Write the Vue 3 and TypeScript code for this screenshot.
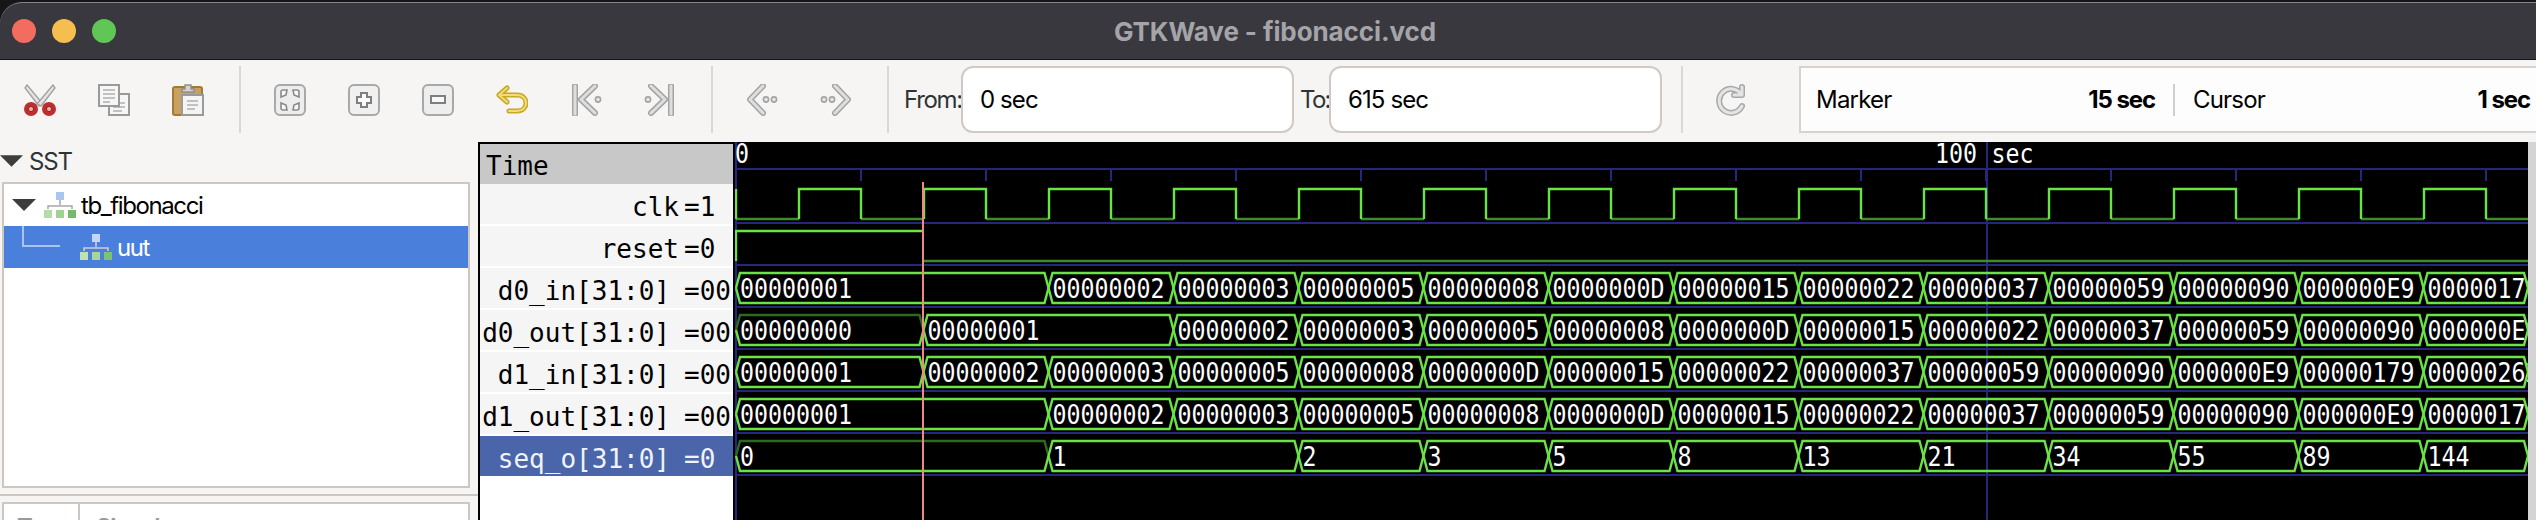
<script setup lang="ts">
interface Segment {
  x0: number
  x1: number
  text: string
  dim: boolean
}

const RIGHT = 2528
const HALF = 62.5
const START = 736

function edge(n: number): number {
  return START + HALF * n
}

function px(n: number): number {
  return Math.round(edge(n) + 0.4)
}

function hex(v: string): string {
  return v.padStart(8, '0')
}

// transitions are half clock periods counted from time 0
function bus(values: string[], firstEdges: number[]): Segment[] {
  const segs: Segment[] = []
  let n = 0
  values.forEach((text, i) => {
    const next = i < firstEdges.length ? firstEdges[i] : n + 2
    const x1 = Math.min(edge(next), RIGHT)
    segs.push({ x0: edge(n), x1, text, dim: /^0+$/.test(text) })
    n = next
  })
  return segs
}

const fibHex = ['00000001', '00000002', '00000003', '00000005', '00000008', '0000000D', '00000015', '00000022', '00000037', '00000059', '00000090', '000000E9', '00000179', '00000262']

const busRows = [
  { top: 273, segs: bus(fibHex.slice(0, 13), [5]) },
  { top: 315, segs: bus([hex('0'), ...fibHex.slice(0, 12)], [3, 7]) },
  { top: 357, segs: bus(fibHex.slice(0, 14), [3, 5]) },
  { top: 399, segs: bus(fibHex.slice(0, 13), [5]) },
  { top: 441, segs: bus(['0', '1', '2', '3', '5', '8', '13', '21', '34', '55', '89', '144'], [5, 9]) },
]

function topLine(s: Segment, top: number): string {
  const mid = top + 15
  return `${s.x0},${mid} ${s.x0 + 4},${top} ${s.x1 - 4},${top} ${s.x1},${mid}`
}

function botLine(s: Segment, top: number): string {
  const mid = top + 15
  const bot = top + 30
  return `${s.x0},${mid} ${s.x0 + 4},${bot} ${s.x1 - 4},${bot} ${s.x1},${mid}`
}

// gtkwave's wave font is taller than it is wide
function textAt(x: number, y: number): string {
  return `translate(${x} ${y}) scale(0.895 1)`
}

const clockHigh: string[] = ['736,189 736,219']
const clockLow: string[] = []
clockLow.push(`736,219 ${px(1)},219`)
for (let n = 1; n < 29; n += 2) {
  clockHigh.push(`${px(n)},219 ${px(n)},189 ${px(n + 1)},189 ${px(n + 1)},219`)
  clockLow.push(`${px(n + 1)},219 ${Math.min(px(n + 2), RIGHT)},219`)
}

const rowLines = [223, 265, 307, 349, 391, 433, 475]
const ticks: number[] = []
for (let n = 2; n < 29; n += 2) ticks.push(px(n))

const signals = [
  { name: 'clk', value: '=1', vector: false, selected: false },
  { name: 'reset', value: '=0', vector: false, selected: false },
  { name: 'd0_in[31:0]', value: '=00', vector: true, selected: false },
  { name: 'd0_out[31:0]', value: '=00', vector: true, selected: false },
  { name: 'd1_in[31:0]', value: '=00', vector: true, selected: false },
  { name: 'd1_out[31:0]', value: '=00', vector: true, selected: false },
  { name: 'seq_o[31:0]', value: '=0', vector: true, selected: true },
]
</script>

<template>
  <div class="window">
    <header class="titlebar">
      <div class="lights">
        <span class="light red"></span>
        <span class="light yellow"></span>
        <span class="light green"></span>
      </div>
      <div class="title">GTKWave - fibonacci.vcd</div>
    </header>

    <div class="toolbar">
      <div class="tools">
        <svg class="icon" viewBox="0 0 32 32">
          <path d="M3 1 L19 20 L15 22 L1 4 Z" fill="#e4e4e4" stroke="#a2a2a2" stroke-width="1.4" />
          <path d="M29 1 L13 20 L17 22 L31 4 Z" fill="#e4e4e4" stroke="#a2a2a2" stroke-width="1.4" />
          <circle cx="7" cy="25" r="7" fill="#bf2e2e" />
          <circle cx="25" cy="25" r="7" fill="#bf2e2e" />
          <circle cx="7" cy="25" r="2.6" fill="#e9b0a8" stroke="#8f1e1e" />
          <circle cx="25" cy="25" r="2.6" fill="#e9b0a8" stroke="#8f1e1e" />
        </svg>
        <svg class="icon" viewBox="0 0 32 32">
          <rect x="11" y="10" width="20" height="21" fill="#f6f6f6" stroke="#9a9a9a" stroke-width="2" />
          <path d="M18 19h9M15 23h12M15 27h9" stroke="#b0b0b0" stroke-width="1.5" />
          <rect x="1" y="1" width="20" height="21" fill="#f6f6f6" stroke="#9a9a9a" stroke-width="2" />
          <path d="M5 6h12M5 10h12M5 14h12M5 18h7" stroke="#b0b0b0" stroke-width="1.5" />
        </svg>
        <svg class="icon" viewBox="0 0 32 32">
          <rect x="1" y="3" width="29" height="28" rx="2" fill="#c9a05f" stroke="#a27a38" stroke-width="2" />
          <rect x="10" y="11" width="21" height="20" fill="#f4f4f4" stroke="#9a9a9a" stroke-width="2" />
          <path d="M15 17h11M15 21h11M15 25h8" stroke="#b0b0b0" stroke-width="1.5" />
          <path d="M10 8h12V5h-3V1h-6v4h-3z" fill="#d4d4d4" stroke="#8e8e8e" stroke-width="1.4" />
        </svg>
      </div>
      <span class="sep"></span>
      <div class="tools">
        <svg class="icon" viewBox="0 0 32 32">
          <rect x="1" y="1" width="30" height="30" rx="5" fill="#ededed" stroke="#a8a8a8" stroke-width="2" />
          <path d="M7 8q0-2 2-2h4l-1 5-5 2zM25 8q0-2-2-2h-4l1 5 5 2zM7 24q0 2 2 2h4l-1-5-5-2zM25 24q0 2-2 2h-4l1-5 5-2z" fill="#f8f8f8" stroke="#8a8a8a" stroke-width="1.6" />
        </svg>
        <svg class="icon" viewBox="0 0 32 32">
          <rect x="1" y="1" width="30" height="30" rx="5" fill="#f0f0f0" stroke="#a8a8a8" stroke-width="2" />
          <path d="M13 9h6v4h4v6h-4v4h-6v-4H9v-6h4z" fill="#fafafa" stroke="#7f7f7f" stroke-width="2" />
        </svg>
        <svg class="icon" viewBox="0 0 32 32">
          <rect x="1" y="1" width="30" height="30" rx="5" fill="#eeeeee" stroke="#a8a8a8" stroke-width="2" />
          <rect x="9" y="12" width="14" height="7" fill="#f8f8f8" stroke="#7f7f7f" stroke-width="2" />
        </svg>
        <svg class="icon" viewBox="0 0 32 32">
          <g fill="none" stroke-linejoin="round">
            <path d="M11 4 L3 11 L11 18 M4 11 H21 C33 11 33 27 21 27 H13" stroke="#c8a824" stroke-width="5" stroke-linecap="round" />
            <path d="M11 4 L3 11 L11 18 M4 11 H21 C33 11 33 27 21 27 H13" stroke="#f0dc78" stroke-width="2" stroke-linecap="round" />
          </g>
        </svg>
        <svg class="icon" viewBox="0 0 32 32">
          <g fill="none" stroke-linecap="round" stroke-linejoin="round">
            <path d="M5 2V30M25 2 L11 15.5 L25 29" stroke="#a4a4a4" stroke-width="6" />
            <path d="M5 2V30M25 2 L11 15.5 L25 29" stroke="#dedede" stroke-width="3" />
          </g>
          <circle cx="28" cy="15.5" r="2.6" fill="#e6e6e6" stroke="#a4a4a4" stroke-width="1.6" />
        </svg>
        <svg class="icon" viewBox="0 0 32 32">
          <g fill="none" stroke-linecap="round" stroke-linejoin="round">
            <path d="M27 2V30M7 2 L21 15.5 L7 29" stroke="#a4a4a4" stroke-width="6" />
            <path d="M27 2V30M7 2 L21 15.5 L7 29" stroke="#dedede" stroke-width="3" />
          </g>
          <circle cx="4" cy="15.5" r="2.6" fill="#e6e6e6" stroke="#a4a4a4" stroke-width="1.6" />
        </svg>
      </div>
      <span class="sep"></span>
      <div class="tools">
        <svg class="icon" viewBox="0 0 32 32">
          <g fill="none" stroke-linecap="round" stroke-linejoin="round">
            <path d="M17 2 L4 15.5 L17 29" stroke="#a4a4a4" stroke-width="6" />
            <path d="M17 2 L4 15.5 L17 29" stroke="#dedede" stroke-width="3" />
          </g>
          <circle cx="20" cy="15.5" r="2.6" fill="#e6e6e6" stroke="#a4a4a4" stroke-width="1.6" />
          <circle cx="28" cy="15.5" r="2.6" fill="#e6e6e6" stroke="#a4a4a4" stroke-width="1.6" />
        </svg>
        <svg class="icon" viewBox="0 0 32 32">
          <g fill="none" stroke-linecap="round" stroke-linejoin="round">
            <path d="M15 2 L28 15.5 L15 29" stroke="#a4a4a4" stroke-width="6" />
            <path d="M15 2 L28 15.5 L15 29" stroke="#dedede" stroke-width="3" />
          </g>
          <circle cx="4" cy="15.5" r="2.6" fill="#e6e6e6" stroke="#a4a4a4" stroke-width="1.6" />
          <circle cx="12" cy="15.5" r="2.6" fill="#e6e6e6" stroke="#a4a4a4" stroke-width="1.6" />
        </svg>
      </div>
      <span class="sep last"></span>
      <label class="field-label from">From:</label>
      <div class="field">0 sec</div>
      <label class="field-label to">To:</label>
      <div class="field">615 sec</div>
      <span class="sep reload-sep"></span>
      <svg class="icon reload" viewBox="0 0 32 32">
        <g fill="none" stroke-linecap="round" stroke-linejoin="round">
          <path d="M26 3 V11 H18 M25 10 A12 12 0 1 0 26 22" stroke="#a8a8a8" stroke-width="6" />
          <path d="M26 3 V11 H18 M25 10 A12 12 0 1 0 26 22" stroke="#e4e4e4" stroke-width="3" />
        </g>
      </svg>
      <div class="status">
        <div class="status-cell">
          <span>Marker</span>
          <b>15 sec</b>
        </div>
        <span class="status-div"></span>
        <div class="status-cell">
          <span>Cursor</span>
          <b>1 sec</b>
        </div>
      </div>
    </div>

    <main class="main">
      <aside class="sidebar">
        <div class="sst">
          <svg class="arrow" viewBox="0 0 24 12"><path d="M0 0H24L12 12Z" fill="#3d3d3d" /></svg>
          <span>SST</span>
        </div>
        <div class="tree">
          <div class="tree-row">
            <svg class="arrow small" viewBox="0 0 24 12"><path d="M0 0H24L12 12Z" fill="#3d3d3d" /></svg>
            <svg class="module" viewBox="0 0 32 26">
              <rect x="12" y="0" width="8" height="8" fill="#a9c6ee" />
              <path d="M16 8v5M4 17v-3h24v3" fill="none" stroke="#a8a8a8" stroke-width="1.5" />
              <rect x="0" y="18" width="8" height="8" fill="#b4dca6" />
              <rect x="12" y="18" width="8" height="8" fill="#a0d291" />
              <rect x="24" y="18" width="8" height="8" fill="#72bc66" />
            </svg>
            <span>tb_fibonacci</span>
          </div>
          <div class="tree-row selected">
            <span class="branch"></span>
            <svg class="module" viewBox="0 0 32 26">
              <rect x="12" y="0" width="8" height="8" fill="#c4d6f4" />
              <path d="M16 8v5M4 17v-3h24v3" fill="none" stroke="#d0d0d0" stroke-width="1.5" />
              <rect x="0" y="18" width="8" height="8" fill="#bfe2ae" />
              <rect x="12" y="18" width="8" height="8" fill="#a8d69a" />
              <rect x="24" y="18" width="8" height="8" fill="#7cc472" />
            </svg>
            <span>uut</span>
          </div>
        </div>
        <div class="divider"></div>
        <div class="list-head">
          <span class="col-type">Type</span>
          <span class="col-signals">Signals</span>
        </div>
      </aside>

      <section class="signals">
        <div class="time-head">Time</div>
        <div
          v-for="sig in signals"
          :key="sig.name"
          class="sig-row"
          :class="{ selected: sig.selected }"
        >
          <span class="sig-name" :class="{ vector: sig.vector }">{{ sig.name }}</span>
          <span class="sig-value">{{ sig.value }}</span>
        </div>
      </section>

      <svg class="waves" viewBox="735 142 1793 378" width="1793" height="378">
        <g class="grid">
          <line x1="735" x2="2528" y1="169" y2="169" />
          <line v-for="y in rowLines" :key="y" x1="735" x2="2528" :y1="y" :y2="y" />
          <line v-for="x in ticks" :key="x" :x1="x" :x2="x" y1="169" y2="181" />
          <line x1="736" x2="736" y1="142" y2="520" />
          <line x1="1987" x2="1987" y1="142" y2="520" />
        </g>

        <g class="labels">
          <text :transform="textAt(735, 163)">0</text>
          <text :transform="textAt(1935, 163)">100</text>
          <text :transform="textAt(1991.5, 163)">sec</text>
        </g>
        <g v-for="row in busRows" :key="row.top" class="labels">
          <text v-for="s in row.segs" :key="s.x0" :transform="textAt(s.x0 + 4, row.top + 25)">{{ s.text }}</text>
        </g>

        <g class="low">
          <polyline v-for="p in clockLow" :key="p" :points="p" />
          <polyline points="923,261 2528,261" />
        </g>
        <g class="high">
          <polyline v-for="p in clockHigh" :key="p" :points="p" />
          <polyline points="736,261 736,231 922,231" />
        </g>
        <g v-for="row in busRows" :key="'b' + row.top">
          <template v-for="s in row.segs" :key="s.x0">
            <polyline :class="s.dim ? 'dim' : 'bright'" :points="topLine(s, row.top)" />
            <polyline class="bright" :points="botLine(s, row.top)" />
          </template>
        </g>
        <line class="marker" x1="923" x2="923" y1="182" y2="520" />
      </svg>

      <div class="scrollbar"></div>
    </main>
  </div>
</template>

<style scoped>
.window {
  width: 2536px;
  height: 520px;
  overflow: hidden;
  font-family: Inter, "Noto Sans", sans-serif;
  display: flex;
  flex-direction: column;
  box-sizing: border-box;
  padding-top: 2px;
}

.titlebar {
  height: 56px;
  flex: none;
  display: flex;
  align-items: center;
  background: #38383e;
  border-top: 1px solid #85858a;
  border-bottom: 1px solid #141416;
  border-radius: 22px 0 0 0;
}

.lights {
  display: flex;
  gap: 16px;
  padding-left: 12px;
  flex: none;
}

.light {
  width: 24px;
  height: 24px;
  border-radius: 50%;
}

.red { background: #f26d60; }
.yellow { background: #f6bd4f; }
.green { background: #60c655; }

.title {
  flex: 1;
  margin-left: -102px;
  text-align: center;
  color: #a4a4a9;
  font-size: 26px;
  font-weight: 700;
  letter-spacing: -0.1px;
}

.toolbar {
  height: 82px;
  flex: none;
  display: flex;
  align-items: center;
  padding-left: 24px;
  background: #f6f5f4;
  box-sizing: border-box;
  padding-bottom: 3px;
}

.tools {
  display: flex;
  gap: 42px;
}

.icon {
  width: 32px;
  height: 32px;
  flex: none;
  filter: blur(0.5px);
}

.sep {
  width: 2px;
  height: 67px;
  flex: none;
  margin: 0 33px 0 35px;
  background: #dad8d5;
}

.sep.last {
  margin-right: 15px;
}

.sep.reload-sep {
  margin: 0 33px 0 19px;
}

.field-label {
  color: #2e3436;
  font-size: 24px;
  letter-spacing: -1.3px;
  flex: none;
}

.from { width: 57px; }
.to { width: 29px; margin-left: 6px; letter-spacing: -1.7px; }

.field {
  width: 333px;
  height: 67px;
  flex: none;
  box-sizing: border-box;
  border: 2px solid #cfcac5;
  border-radius: 12px;
  background: #fff;
  display: flex;
  align-items: center;
  padding-left: 17px;
  font-size: 24px;
  letter-spacing: -0.9px;
  color: #000;
}

.reload {
  margin-right: 51px;
}

.status {
  flex: none;
  width: 760px;
  height: 67px;
  box-sizing: border-box;
  border: 2px solid #d6d3ce;
  background: #fdfdfd;
  display: grid;
  grid-template-columns: 339px 38px 337px;
  align-items: center;
  padding-left: 15px;
  font-size: 24px;
  letter-spacing: -0.8px;
  color: #000;
}

.status-cell {
  display: flex;
  justify-content: space-between;
}

.status-cell b {
  font-weight: 700;
  letter-spacing: -1.1px;
}

.status-div {
  width: 2px;
  height: 32px;
  background: #cfcfcf;
  margin-left: 18px;
}

.main {
  flex: 1;
  min-height: 0;
  display: flex;
  background: #000;
}

.sidebar {
  width: 478px;
  flex: none;
  display: flex;
  flex-direction: column;
  background: #f6f5f4;
  color: #000;
  font-size: 24px;
  letter-spacing: -1.4px;
}

.sst {
  height: 40px;
  flex: none;
  display: flex;
  align-items: center;
  gap: 6px;
  color: #2e3436;
  padding-bottom: 2px;
  box-sizing: border-box;
  letter-spacing: -1.2px;
}

.arrow {
  width: 23px;
  height: 12px;
  flex: none;
}

.arrow.small {
  width: 24px;
  margin: 0 3px 0 8px;
}

.tree {
  height: 306px;
  flex: none;
  margin: 0 8px 0 2px;
  box-sizing: border-box;
  border: 2px solid #cdc7c2;
  background: #fff;
}

.tree-row {
  height: 42px;
  display: flex;
  align-items: center;
  gap: 5px;
}

.tree-row.selected {
  background: #4a80dc;
  color: #fff;
}

.module {
  width: 32px;
  height: 26px;
  flex: none;
  filter: blur(0.4px);
}

.branch {
  width: 38px;
  height: 21px;
  flex: none;
  align-self: flex-start;
  margin: 0 15px 0 18px;
  border-left: 2px solid #a9c4f0;
  border-bottom: 2px solid #a9c4f0;
  box-sizing: border-box;
}

.divider {
  height: 2px;
  flex: none;
  margin-top: 6px;
  background: #cdc7c2;
}

.list-head {
  height: 40px;
  flex: none;
  margin: 6px 8px 0 2px;
  box-sizing: border-box;
  border: 2px solid #cdc7c2;
  border-bottom: 0;
  background: #fff;
  display: flex;
  color: #9a9a9a;
  font-weight: 600;
  overflow: hidden;
}

.col-type {
  width: 76px;
  flex: none;
  box-sizing: border-box;
  border-right: 2px solid #cdc7c2;
  padding: 9px 0 0 13px;
}

.col-signals {
  padding: 9px 0 0 16px;
}

.signals {
  width: 257px;
  flex: none;
  box-sizing: border-box;
  border: solid #000;
  border-width: 2px 2px 0 2px;
  background: #fff;
  font-family: "DejaVu Sans Mono", monospace;
  font-size: 26px;
  color: #000;
  overflow: hidden;
}

.time-head {
  height: 40px;
  box-sizing: border-box;
  background: #c8c8c8;
  padding-left: 6px;
  line-height: 44px;
}

.sig-row {
  height: 40px;
  margin-bottom: 2px;
  background: #f5f5f5;
  display: grid;
  grid-template-columns: 204px 49px;
  line-height: 46px;
  white-space: pre;
}

.sig-row.selected {
  background: #4a65a9;
  color: #f0f3fa;
}

.sig-name {
  text-align: right;
  padding-right: 5px;
}

.sig-name.vector {
  padding-right: 14px;
}

.sig-value {
  overflow: hidden;
}

.waves {
  flex: none;
  display: block;
  background: #000;
}

.labels text {
  font-family: "DejaVu Sans Mono", monospace;
  font-size: 26px;
  fill: #fff;
}

.grid line {
  stroke: #26267c;
  stroke-width: 2;
}

.waves polyline {
  fill: none;
  stroke-width: 2.4;
}

.high polyline,
.bright {
  stroke: #6ae445;
}

.low polyline {
  stroke: #3f8a2b;
}

.dim {
  stroke: #2c6a1e;
}

.marker {
  stroke: #f0897f;
  stroke-width: 2;
}

.scrollbar {
  flex: 1;
  background: #d4d4d4;
}
</style>

<style>
html,
body {
  margin: 0;
  background: #161618;
  overflow: hidden;
}
</style>
